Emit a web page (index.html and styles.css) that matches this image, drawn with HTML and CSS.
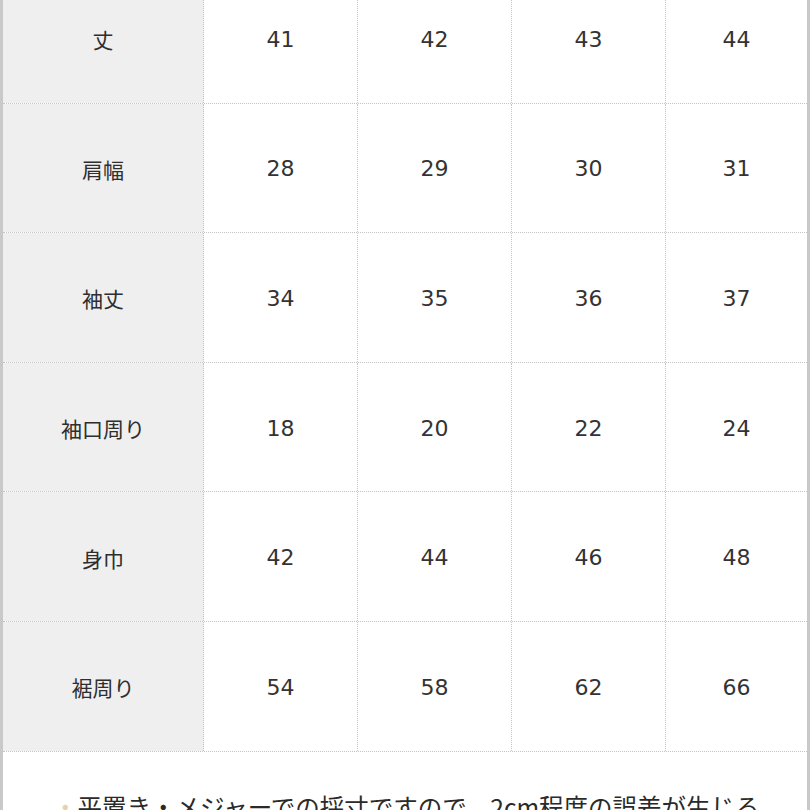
FILE: index.html
```html
<!DOCTYPE html>
<html lang="ja">
<head>
<meta charset="utf-8">
<link rel="stylesheet" href="styles.css">
</head>
<body>
<div class="frame">
  <div class="table">
    <div class="row"><div class="cell head">丈</div><div class="cell">41</div><div class="cell">42</div><div class="cell">43</div><div class="cell last">44</div></div>
    <div class="row"><div class="cell head">肩幅</div><div class="cell">28</div><div class="cell">29</div><div class="cell">30</div><div class="cell last">31</div></div>
    <div class="row"><div class="cell head">袖丈</div><div class="cell">34</div><div class="cell">35</div><div class="cell">36</div><div class="cell last">37</div></div>
    <div class="row"><div class="cell head">袖口周り</div><div class="cell">18</div><div class="cell">20</div><div class="cell">22</div><div class="cell last">24</div></div>
    <div class="row"><div class="cell head">身巾</div><div class="cell">42</div><div class="cell">44</div><div class="cell">46</div><div class="cell last">48</div></div>
    <div class="row"><div class="cell head">裾周り</div><div class="cell">54</div><div class="cell">58</div><div class="cell">62</div><div class="cell last">66</div></div>
  </div>
  <div class="note"><span class="mark">・</span>平置き・メジャーでの採寸ですので、2cm程度の誤差が生じる</div>
</div>
</body>
</html>
```
FILE: styles.css
```css
html, body {
  margin: 0;
  padding: 0;
  background: #ffffff;
}
body {
  width: 810px;
  height: 810px;
  overflow: hidden;
  font-family: "DejaVu Sans", "Noto Sans CJK JP", sans-serif;
  color: #333333;
}
.frame {
  width: 804px;
  border-left: 3px solid #c9c9c9;
  border-right: 3px solid #c9c9c9;
  height: 836px;
  background: #ffffff;
}
.table {
  margin-top: -26px;
  display: flex;
  flex-direction: column;
}
.row {
  display: grid;
  grid-template-columns: 201px 154px 154px 154px 141px;
  height: 129.6px;
  box-sizing: border-box;
  border-bottom: 1px dotted #c4c4c4;
}
.cell {
  display: flex;
  align-items: center;
  justify-content: center;
  font-size: 22px;
  border-right: 1px dotted #c4c4c4;
  box-sizing: border-box;
  padding-top: 2px;
}
.cell.last {
  border-right: none;
}
.head {
  background: #efefef;
  font-family: "Noto Sans CJK JP", sans-serif;
  font-size: 21px;
  color: #2e2e2e;
}
.note {
  padding: 40px 0 0 50px;
  font-family: "Noto Sans CJK JP", sans-serif;
  font-size: 24.5px;
  line-height: 30px;
  color: #2a2a2a;
  white-space: nowrap;
}
.mark {
  color: #e6d2b0;
}
```
